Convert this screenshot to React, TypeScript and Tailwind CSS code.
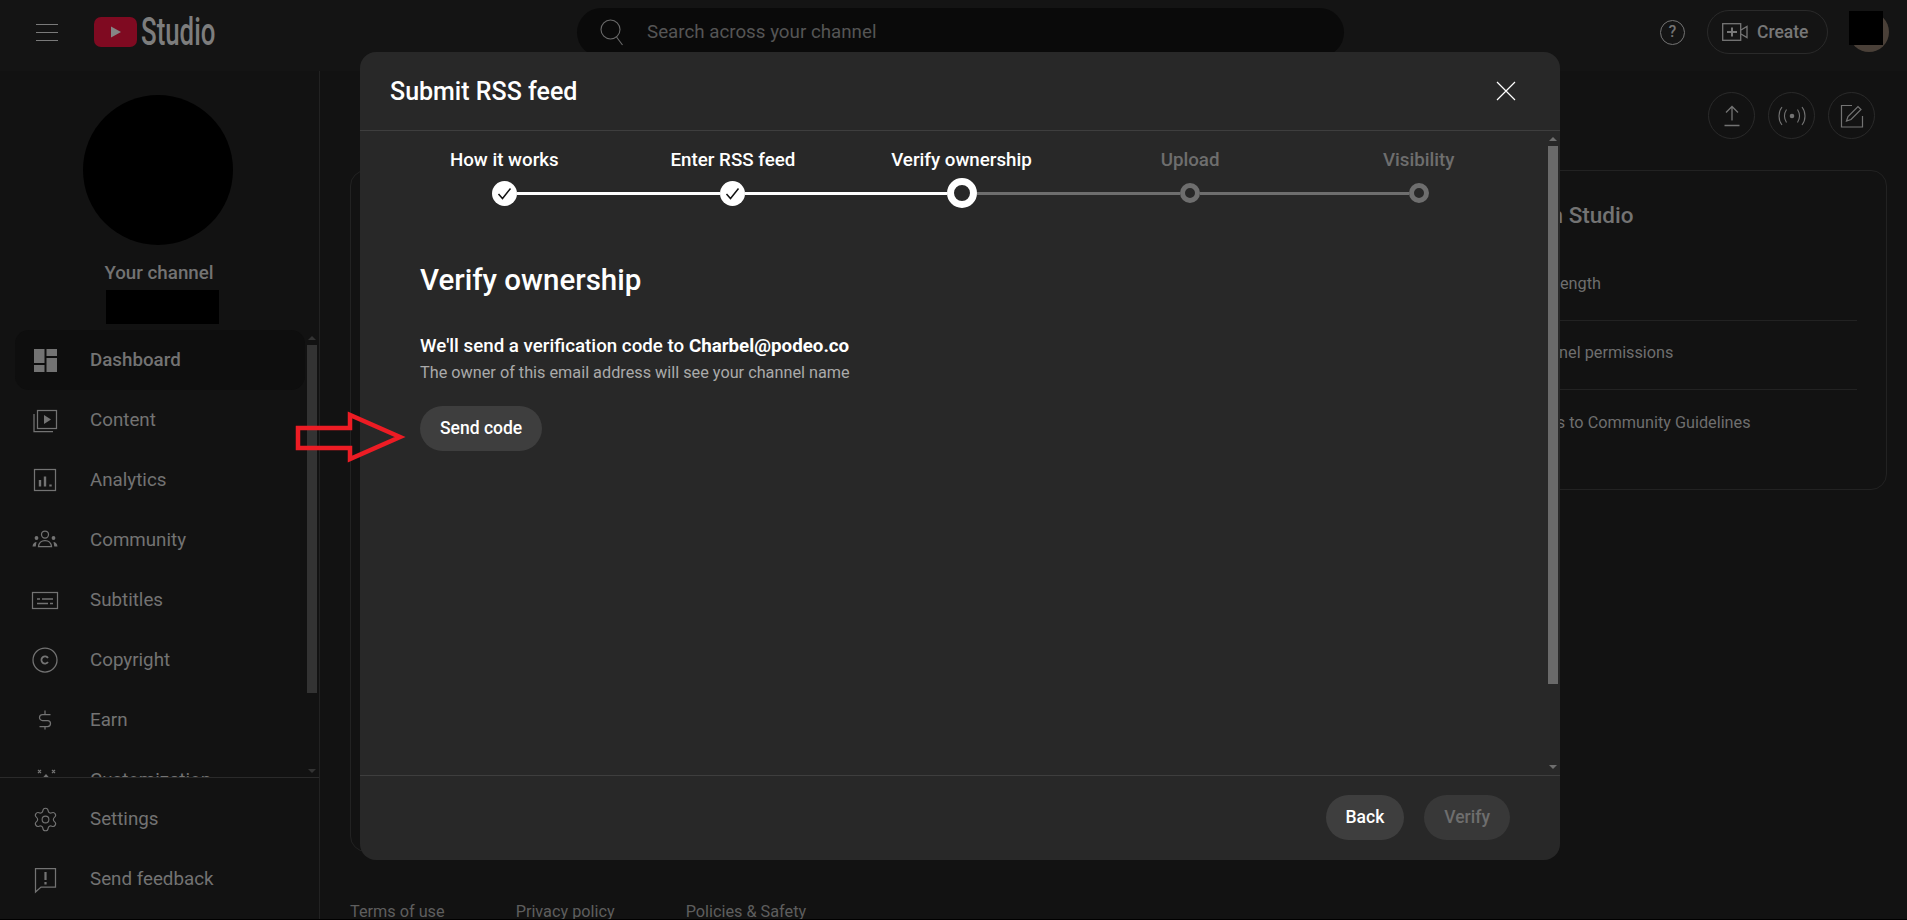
import React from "react";
import { Settings } from "lucide-react";

const Ico = ({ children, w = 30, h = 30 }: { children: React.ReactNode; w?: number; h?: number }) => (
  <svg width={w} height={h} viewBox={`0 0 ${w} ${h}`} fill="none" stroke="currentColor" strokeWidth="1.25" className="shrink-0">
    {children}
  </svg>
);

const icons: Record<string, React.ReactNode> = {
  Dashboard: (
    <Ico>
      <g fill="currentColor" stroke="none">
        <rect x="4" y="4" width="10.5" height="14" />
        <rect x="4" y="20" width="10.5" height="7" />
        <rect x="16.5" y="4" width="10.5" height="7" />
        <rect x="16.5" y="13" width="10.5" height="14" />
      </g>
    </Ico>
  ),
  Content: (
    <Ico>
      <rect x="7.5" y="5.5" width="19" height="18" />
      <path d="M14 10v9l7-4.500z" fill="currentColor" stroke="none" />
      <path d="M4 9v17.500h19" />
    </Ico>
  ),
  Analytics: (
    <Ico>
      <rect x="4.500" y="4.500" width="21" height="21" />
      <path d="M10 15v6.500M15 11.500v10" strokeWidth="2.400" />
      <path d="M20.500 19.500v2" strokeWidth="2.400" />
    </Ico>
  ),
  Community: (
    <Ico>
      <circle cx="15" cy="9.500" r="3.500" />
      <path d="M8.500 21.500c.5-4.500 3.500-6 6.500-6s6 1.500 6.500 6z" />
      <circle cx="6.500" cy="13" r="1.900" fill="currentColor" stroke="none" />
      <circle cx="23.500" cy="13" r="1.900" fill="currentColor" stroke="none" />
      <path d="M2.500 21.500c.3-3 2-4.500 4-4.500l-.8 4.500zM27.500 21.500c-.3-3-2-4.500-4-4.500l.8 4.500z" fill="currentColor" stroke="none" />
    </Ico>
  ),
  Subtitles: (
    <Ico>
      <rect x="2.500" y="7.500" width="25" height="16" />
      <path d="M7 14h3M12 14h11M7 18.500h11M20 18.500h3" strokeWidth="1.500" />
    </Ico>
  ),
  Copyright: (
    <Ico>
      <circle cx="15" cy="15" r="12" />
      <path d="M18 13a3.600 3.600 0 1 0 0 4" strokeWidth="1.800" />
    </Ico>
  ),
  Earn: (
    <Ico>
      <path d="M20.500 9.500h-8a3 3 0 0 0 0 6h5a3 3 0 0 1 0 6h-8M15 5.500v4M15 21.500v3" />
    </Ico>
  ),
  Customization: (
    <Ico>
      <path d="M8 5l3 3M11 5l-3 3M22 5l3 3M25 5l-3 3" />
      <path d="M16 9l7 8H9z" fill="currentColor" stroke="none" />
    </Ico>
  ),
  "Send feedback": (
    <Ico>
      <path d="M5.500 4.500h20v18.500H11l-5.500 5z" />
      <path d="M15.500 8v8M15.500 18v2.500" strokeWidth="2.200" />
    </Ico>
  ),
};

const navItems = ["Dashboard", "Content", "Analytics", "Community", "Subtitles", "Copyright", "Earn", "Customization"];

const Row = ({ label, active }: { label: string; active?: boolean }) => (
  <div className={`mr-[2px] ml-[15px] flex h-[60px] shrink-0 items-center gap-[30px] rounded-[14px] pl-[15px] ${active ? "bg-[#0e0e0e] font-medium" : ""} text-[18.75px] text-[#737373]`}>
    {label === "Settings" ? <span className="flex w-[30px] justify-center"><Settings size={27} strokeWidth={1} /></span> : icons[label]}
    <span>{label}</span>
  </div>
);

const ScrollUp = ({ color }: { color: string }) => (
  <svg width="8" height="4" viewBox="0 0 8 4" className="shrink-0"><path d="M0 4l4-4 4 4z" fill={color} /></svg>
);
const ScrollDown = ({ color }: { color: string }) => (
  <svg width="8" height="4" viewBox="0 0 8 4" className="shrink-0"><path d="M0 0l4 4 4-4z" fill={color} /></svg>
);

const Step = ({ label, state, first, last }: { label: string; state: "done" | "current" | "todo"; first?: boolean; last?: boolean }) => {
  const leftOn = state === "done" || state === "current";
  const rightOn = state === "done";
  return (
    <div className="flex flex-col items-center">
      <div className={`h-[24px] text-[18.75px] leading-[24px] font-medium ${state === "todo" ? "text-[#6e6e6e]" : "text-white"}`}>{label}</div>
      <div className="mt-[6px] flex h-[30px] w-full items-center">
        <div className={`h-[3px] flex-1 ${first ? "" : leftOn ? "bg-white" : "bg-[#6e6e6e]"}`} />
        {state === "done" && (
          <div className="flex h-[25px] w-[25px] items-center justify-center rounded-full bg-white">
            <svg width="17" height="17" viewBox="0 0 17 17" fill="none" stroke="#111" strokeWidth="1.500"><path d="M2.500 9l4 4.500 8-10" /></svg>
          </div>
        )}
        {state === "current" && <div className="h-[30px] w-[30px] rounded-full border-[7.5px] border-white bg-[#282828]" />}
        {state === "todo" && <div className="h-[20px] w-[20px] rounded-full border-[5px] border-[#6e6e6e] bg-[#282828]" />}
        <div className={`h-[3px] flex-1 ${last ? "" : rightOn ? "bg-white" : "bg-[#6e6e6e]"}`} />
      </div>
    </div>
  );
};

const RoundIcon = ({ children }: { children: React.ReactNode }) => (
  <div className="flex h-[47px] w-[47px] items-center justify-center rounded-full border border-[#2a2a2a] text-[#737373]">{children}</div>
);

export default function App() {
  return (
    <div className="relative h-[920px] w-[1907px] overflow-hidden border-b border-black bg-[#121212] font-['Roboto',sans-serif]">
      {/* top bar */}
      <header className="flex h-[71px] items-center bg-[#141414] pr-[18px] pb-[7px]">
        <div className="ml-[36px] flex w-[22px] flex-col gap-[7px]">
          <div className="h-px bg-[#7a7a7a]" />
          <div className="h-px bg-[#7a7a7a]" />
          <div className="h-px bg-[#7a7a7a]" />
        </div>
        <svg width="43" height="30" viewBox="0 0 43 30" className="ml-[36px] shrink-0">
          <rect width="43" height="30" rx="7" fill="#7f0a21" />
          <path d="M17 9.500v11l10-5.500z" fill="#858585" />
        </svg>
        <div className="ml-[4px] w-[75px] origin-left scale-x-[.68] text-[38px] leading-[38px] font-medium whitespace-nowrap text-[#7d7d7d]">Studio</div>
        <div className="ml-[361px] flex h-[49px] w-[767px] shrink-0 items-center rounded-full bg-[#0a0a0a] pl-[22px]">
          <svg width="26" height="28" viewBox="0 0 26 28" fill="none" stroke="#6a6a6a" strokeWidth="1.100"><circle cx="11.500" cy="11.500" r="9.500" /><path d="M17.500 19l6 8" /></svg>
          <span className="ml-[22px] text-[18.75px] text-[#555]">Search across your channel</span>
        </div>
        <div className="ml-auto flex items-center">
          <div className="flex h-[25px] w-[25px] items-center justify-center rounded-full border border-[#737373] text-[16px] font-medium text-[#737373]">?</div>
          <div className="ml-[22px] flex h-[44px] w-[121px] items-center rounded-full border border-[#2a2a2a] pl-[14px] text-[#777]">
            <svg width="26" height="18" viewBox="0 0 26 18" fill="none" stroke="currentColor" strokeWidth="1.300" className="shrink-0">
              <rect x=".7" y=".7" width="18" height="16.600" />
              <path d="M5 9h10M10 4.500v9" strokeWidth="2" />
              <path d="M19 7l6-3.500v11L19 11" />
            </svg>
            <span className="ml-[9px] text-[17.5px] font-medium">Create</span>
          </div>
          <div className="relative ml-[21px] h-[40px] w-[40px] rounded-full bg-[#4a4038]">
            <div className="absolute top-[-1px] left-0 h-[34px] w-[34px] bg-black" />
          </div>
        </div>
      </header>

      <div className="flex h-[848px]">
        {/* sidebar */}
        <aside className="flex w-[320px] shrink-0 flex-col border-r border-[#222]">
          <div className="flex flex-col items-center pt-[24px] pr-[3px]">
            <div className="h-[150px] w-[150px] rounded-full bg-black" />
            <div className="mt-[16px] ml-[2px] h-[24px] text-[18.75px] leading-[24px] font-medium text-[#737373]">Your channel</div>
            <div className="mt-[5px] ml-[9px] h-[34px] w-[113px] bg-black" />
          </div>
          <div className="mt-[6px] flex h-[448px] overflow-hidden border-b border-[#2a2a2a]">
            <div className="h-[500px] min-w-0 flex-1">
              {navItems.map((n) => (
                <Row key={n} label={n} active={n === "Dashboard"} />
              ))}
            </div>
            <div className="mr-[2px] flex w-[10px] flex-col items-center pt-[6px]">
              <ScrollUp color="#333" />
              <div className="mt-[5px] h-[348px] w-[10px] shrink-0 bg-[#333]" />
              <div className="mt-[76px]"><ScrollDown color="#333" /></div>
            </div>
          </div>
          <div className="pt-[11px]">
            <Row label="Settings" />
            <Row label="Send feedback" />
          </div>
        </aside>

        {/* page behind the dialog */}
        <main className="flex min-w-0 flex-1 flex-col pr-[20px] pl-[30px]">
          <div className="flex h-[99px] shrink-0 items-center justify-end">
            <div className="mr-[12px] mb-[10px] flex gap-[13px]">
              <RoundIcon>
                <svg width="20" height="22" viewBox="0 0 20 22" fill="none" stroke="currentColor" strokeWidth="1.300"><path d="M10 15.500V2M4 7.500l6-6 6 6M2.500 20.500h15" /></svg>
              </RoundIcon>
              <RoundIcon>
                <svg width="28" height="20" viewBox="0 0 28 20" fill="none" stroke="currentColor" strokeWidth="1.500"><circle cx="14" cy="10" r="2.300" fill="currentColor" stroke="none" /><path d="M8.500 3.500c-2.500 4-2.500 9 0 13M19.500 3.500c2.500 4 2.500 9 0 13M4 1c-4 5-4 13 0 18M24 1c4 5 4 13 0 18" strokeWidth="1.100" /></svg>
              </RoundIcon>
              <RoundIcon>
                <svg width="24" height="24" viewBox="0 0 24 24" fill="none" stroke="currentColor" strokeWidth="1.200"><path d="M12 1.500H1.500v21.500h21V12" /><path d="M6.500 17l1.500-4.500L18 2.500l3 3-10 10z" /></svg>
              </RoundIcon>
            </div>
          </div>
          <div className="flex h-[682px] shrink-0 items-start gap-[30px]">
            <div className="h-[682px] w-[1015px] shrink-0 rounded-[16px] border border-[#222]" />
            <section className="h-[320px] flex-1 rounded-[16px] border border-[#222] pt-[29px] pr-[29px] pl-[30px]">
              <h2 className="text-[22.5px] leading-[30px] font-medium text-[#737373]">What's new in Studio</h2>
              <div className="mt-[22px] flex flex-col text-[16.250px] text-[#6e6e6e]">
                <div className="flex h-[69px] items-center border-b border-[#222] pb-[4px] pl-[2px]">Maximum Shorts length</div>
                <div className="flex h-[69px] items-center border-b border-[#222] pb-[3px]">Expansion of channel permissions</div>
                <div className="flex h-[69px] items-center pb-[3px]">Upcoming changes to Community Guidelines</div>
              </div>
            </section>
          </div>
          <footer className="mt-[50px] flex gap-[71px] text-[16.250px] leading-[20px] text-[#5e5e5e]">
            <span>Terms of use</span>
            <span>Privacy policy</span>
            <span>Policies &amp; Safety</span>
          </footer>
        </main>
      </div>

      {/* dialog */}
      <div className="absolute top-[52px] left-[360px] flex h-[808px] w-[1200px] flex-col rounded-[16px] bg-[#282828]">
        <div className="flex h-[79px] shrink-0 items-center justify-between border-b border-[#3e3e3e] pr-[44px] pl-[30px]">
          <h2 className="pt-[2px] text-[25px] font-medium text-white">Submit RSS feed</h2>
          <svg width="20" height="20" viewBox="0 0 20 20" stroke="white" strokeWidth="1.200"><path d="M1 1l18 18M19 1L1 19" /></svg>
        </div>
        <div className="flex min-h-0 flex-1">
          <div className="min-w-0 flex-1 pt-[17px] pl-[30px]">
            <div className="grid w-[1143px] grid-cols-5">
              <Step label="How it works" state="done" first />
              <Step label="Enter RSS feed" state="done" />
              <Step label="Verify ownership" state="current" />
              <Step label="Upload" state="todo" />
              <Step label="Visibility" state="todo" last />
            </div>
            <div className="pl-[30px]">
              <h3 className="mt-[54px] h-[36px] text-[29.5px] leading-[36px] font-medium text-white">Verify ownership</h3>
              <p className="mt-[36px] h-[24px] text-[18.75px] leading-[24px] font-medium text-white">
                We'll send a verification code to <b className="font-bold">Charbel@podeo.co</b>
              </p>
              <p className="mt-[5px] h-[20px] text-[16.250px] leading-[20px] text-[#aaa]">The owner of this email address will see your channel name</p>
              <button className="mt-[23px] h-[45px] rounded-full bg-[#3e3e3e] px-[20px] text-[17.5px] font-medium text-white">Send code</button>
            </div>
          </div>
          <div className="mr-[2px] flex w-[10px] flex-col items-center pt-[6px] pb-[6px]">
            <ScrollUp color="#6e6e6e" />
            <div className="mt-[5px] h-[538px] w-[10px] shrink-0 bg-[#6a6a6a]" />
            <div className="mt-auto"><ScrollDown color="#6e6e6e" /></div>
          </div>
        </div>
        <div className="flex h-[85px] shrink-0 items-center justify-end gap-[20px] border-t border-[#3e3e3e] pr-[50px] pb-[2px]">
          <button className="h-[45px] rounded-full bg-[#3e3e3e] px-[20px] text-[17.5px] font-medium text-white">Back</button>
          <button className="h-[45px] rounded-full bg-[#383838] px-[20px] text-[17.5px] font-medium text-[#6e6e6e]">Verify</button>
        </div>
      </div>

      {/* annotation arrow */}
      <svg width="120" height="60" viewBox="0 0 120 60" fill="none" className="absolute top-[408px] left-[292px]">
        <path d="M6 20h52V7l50 22-50 22V40H6z" stroke="#ed1c24" strokeWidth="4.500" />
      </svg>
    </div>
  );
}
